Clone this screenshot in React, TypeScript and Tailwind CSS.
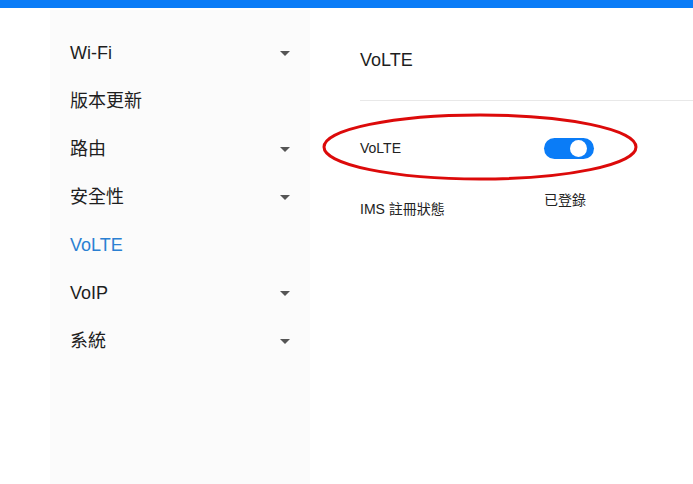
import React from "react";

const Caret = () => (
  <svg width="10" height="5" viewBox="0 0 10 5" className="block">
    <path d="M0 0 L10 0 L5 5 Z" fill="#555" />
  </svg>
);

const items: { label: string; caret: boolean; active?: boolean }[] = [
  { label: "Wi-Fi", caret: true },
  { label: "版本更新", caret: false },
  { label: "路由", caret: true },
  { label: "安全性", caret: true },
  { label: "VoLTE", caret: false, active: true },
  { label: "VoIP", caret: true },
  { label: "系統", caret: true },
];

export default function App() {
  return (
    <div
      className="relative w-[693px] h-[484px] overflow-hidden bg-white"
      style={{ fontFamily: '"Liberation Sans", Arial, "Noto Sans CJK TC", sans-serif' }}
    >
      <div className="h-[8px] bg-[#0a7cf7]" />
      <div className="flex">
        <div className="ml-[50px] mt-[2px] w-[260px] h-[474px] bg-[#fbfbfb] pt-[19px] shrink-0">
          {items.map((it) => (
            <div key={it.label} className="h-[48px] flex items-center justify-between px-5">
              <span
                className={`text-[18px] leading-6 ${it.active ? "text-[#2a80d2]" : "text-[#1e1e1e]"}`}
              >
                {it.label}
              </span>
              {it.caret && <Caret />}
            </div>
          ))}
        </div>
        <div className="flex-1 pl-[50px] pt-[40px]">
          <div className="pb-[28px] border-b border-[#e8e8e8]">
            <div className="text-[18px] leading-6 text-[#1e1e1e]">VoLTE</div>
          </div>
          <div className="mt-[37px] h-[21px] flex items-center">
            <div className="w-[184px] text-[14px] text-[#222]">VoLTE</div>
            <div className="w-[50px] h-[21px] rounded-full bg-[#0a7cf7] relative">
              <div className="absolute right-[7px] top-[2px] w-[17px] h-[17px] rounded-full bg-white" />
            </div>
          </div>
          <div className="mt-[31px] flex items-start">
            <div className="w-[184px] pt-[9px] text-[14px] leading-5 text-[#222]">IMS 註冊狀態</div>
            <div className="text-[14px] leading-5 text-[#222]">已登錄</div>
          </div>
        </div>
      </div>
      <svg
        className="absolute left-[321px] top-[112px]"
        width="318"
        height="70"
        viewBox="0 0 318 70"
      >
        <ellipse cx="159" cy="35" rx="156" ry="32" fill="none" stroke="#dc0a0a" strokeWidth="3" />
      </svg>
    </div>
  );
}
